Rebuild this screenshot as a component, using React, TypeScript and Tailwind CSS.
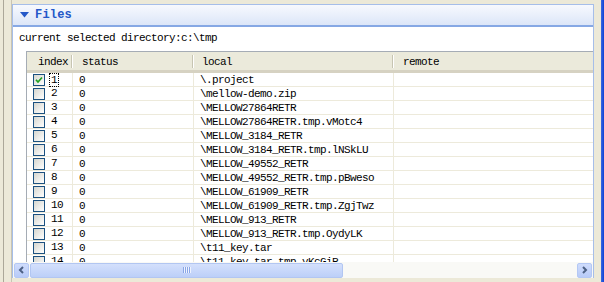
import React from 'react';

const rows = [
  '\\.project',
  '\\mellow-demo.zip',
  '\\MELLOW27864RETR',
  '\\MELLOW27864RETR.tmp.vMotc4',
  '\\MELLOW_3184_RETR',
  '\\MELLOW_3184_RETR.tmp.lNSkLU',
  '\\MELLOW_49552_RETR',
  '\\MELLOW_49552_RETR.tmp.pBweso',
  '\\MELLOW_61909_RETR',
  '\\MELLOW_61909_RETR.tmp.ZgjTwz',
  '\\MELLOW_913_RETR',
  '\\MELLOW_913_RETR.tmp.OydyLK',
  '\\t11_key.tar',
  '\\t11_key.tar.tmp.yKcGiP',
];

/* ─── XP style checkbox ─────────────────────────────────────────── */
function CheckBox({ checked = false }: { checked?: boolean }) {
  return (
    <span className="flex h-[12px] w-[12px] shrink-0 items-center justify-center border border-[#1c5180] bg-gradient-to-br from-[#d6d6cf] to-white">
      {checked && (
        <svg width="8" height="8" viewBox="0 0 8 8">
          <path d="M1 3.8 L3 6 L7 1.5" stroke="#21a121" strokeWidth="1.7" fill="none" />
        </svg>
      )}
    </span>
  );
}

function ScrollButton({ dir }: { dir: 'left' | 'right' }) {
  return (
    <div className="flex h-[15px] w-[15px] items-center justify-center rounded-[2px] border border-[#b4c8f4] bg-gradient-to-b from-[#cfdcfc] to-[#b8cbf8]">
      <svg width="7" height="8" viewBox="0 0 7 8">
        <path
          d={dir === 'left' ? 'M5 1 L2 4 L5 7' : 'M2 1 L5 4 L2 7'}
          stroke="#4d6185"
          strokeWidth="2"
          fill="none"
        />
      </svg>
    </div>
  );
}

export default function App() {
  return (
    <div className="flex h-[282px] w-[604px] overflow-hidden bg-[#ece9d8] font-[family-name:'Liberation_Mono',monospace] text-[11px] tracking-[-0.6px] text-black">
      {/* left frame strip */}
      <div className="flex w-[12px]">
        <div className="w-[3px]" />
        <div className="w-px bg-[#aca899]" />
        <div className="w-[7px]" />
        <div className="w-px bg-[#c8c4b4]" />
      </div>

      {/* Files section */}
      <div className="mt-[4px] flex h-[274px] w-[582px] flex-col border-x border-t border-[#a6bee9]">
        <div className="flex h-[22px] shrink-0 items-center gap-[6px] border-b-2 border-[#86a8e4] bg-gradient-to-b from-[#f7f9fe] to-[#dce6f8] pl-[7px]">
          <svg width="9" height="6" viewBox="0 0 9 6">
            <polygon points="0,0 9,0 4.5,5.5" fill="#2458c8" />
          </svg>
          <span className="text-[12px] font-bold tracking-[0.2px] text-[#2458c8]">Files</span>
        </div>

        <div className="flex min-h-0 flex-1 flex-col overflow-hidden bg-white">
          <div className="flex h-[24px] shrink-0 items-center pb-[2px] pl-[6px]">current selected directory:c:\tmp</div>

          <div className="min-h-0 flex-1 overflow-hidden pl-[13px]">
            <div className="border-l border-t border-[#a5acb5]">
              {/* header */}
              <div className="flex h-[21px] border-b-[3px] border-[#d6d2c2] bg-[#ebeadb]">
                {[
                  ['index', 'w-[46px] pl-[11px]'],
                  ['status', 'w-[121px] pl-[9px]'],
                  ['local', 'w-[200px] pl-[8px]'],
                  ['remote', 'flex-1 pl-[9px]'],
                ].map(([label, cls], i) => (
                  <div key={label} className={'relative flex items-center pt-[2px] ' + cls}>
                    {label}
                    {i < 3 && (
                      <span className="absolute right-0 top-[3px] h-[13px] w-[2px] border-l border-r border-l-[#c7c5b2] border-r-white" />
                    )}
                  </div>
                ))}
              </div>

              {/* body */}
              {rows.map((name, i) => (
                <div key={name} className="flex h-[14px] border-b border-[#edeadb]">
                  <div className="flex w-[46px] items-center gap-[5px] border-r border-[#edeadb] pl-[6px]">
                    <CheckBox checked={i === 0} />
                    <span className={i === 0 ? 'px-px leading-[12px] outline-1 outline-dotted outline-black' : 'px-px'}>
                      {i + 1}
                    </span>
                  </div>
                  <div className="flex w-[121px] items-center border-r border-[#edeadb] pl-[6px] pt-px">0</div>
                  <div className="flex w-[200px] items-center whitespace-nowrap border-r border-[#edeadb] pl-[6px] pt-px">{name}</div>
                  <div className="flex-1" />
                </div>
              ))}
            </div>
          </div>
        </div>

        {/* horizontal scrollbar */}
        <div className="flex h-[16px] shrink-0 items-center gap-px bg-[#f9f9f6] px-px">
          <ScrollButton dir="left" />
          <div className="relative flex h-[15px] w-[313px] items-center justify-center rounded-[2px] border border-[#b2c6f2] bg-gradient-to-b from-[#d4e0fc] to-[#bccff8]">
            <div className="flex gap-px">
              {[0, 1, 2, 3].map((k) => (
                <span key={k} className="h-[6px] w-px bg-[#8aa6e6] shadow-[1px_0_0_#eef3fe]" />
              ))}
            </div>
          </div>
          <div className="flex-1" />
          <ScrollButton dir="right" />
        </div>
      </div>

      {/* right frame strip */}
      <div className="flex flex-1">
        <div className="w-[7px]" />
        <div className="flex-1 bg-gradient-to-r from-[#3a6ae0] to-[#0a3fd6]" />
      </div>
    </div>
  );
}
